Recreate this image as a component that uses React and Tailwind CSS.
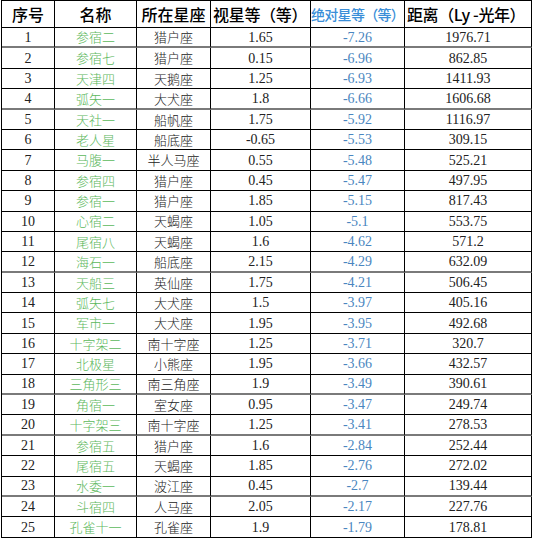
const rows = [
  [1, "参宿二", "猎户座", "1.65", "-7.26", "1976.71"],
  [2, "参宿七", "猎户座", "0.15", "-6.96", "862.85"],
  [3, "天津四", "天鹅座", "1.25", "-6.93", "1411.93"],
  [4, "弧矢一", "大犬座", "1.8", "-6.66", "1606.68"],
  [5, "天社一", "船帆座", "1.75", "-5.92", "1116.97"],
  [6, "老人星", "船底座", "-0.65", "-5.53", "309.15"],
  [7, "马腹一", "半人马座", "0.55", "-5.48", "525.21"],
  [8, "参宿四", "猎户座", "0.45", "-5.47", "497.95"],
  [9, "参宿一", "猎户座", "1.85", "-5.15", "817.43"],
  [10, "心宿二", "天蝎座", "1.05", "-5.1", "553.75"],
  [11, "尾宿八", "天蝎座", "1.6", "-4.62", "571.2"],
  [12, "海石一", "船底座", "2.15", "-4.29", "632.09"],
  [13, "天船三", "英仙座", "1.75", "-4.21", "506.45"],
  [14, "弧矢七", "大犬座", "1.5", "-3.97", "405.16"],
  [15, "军市一", "大犬座", "1.95", "-3.95", "492.68"],
  [16, "十字架二", "南十字座", "1.25", "-3.71", "320.7"],
  [17, "北极星", "小熊座", "1.95", "-3.66", "432.57"],
  [18, "三角形三", "南三角座", "1.9", "-3.49", "390.61"],
  [19, "角宿一", "室女座", "0.95", "-3.47", "249.74"],
  [20, "十字架三", "南十字座", "1.25", "-3.41", "278.53"],
  [21, "参宿五", "猎户座", "1.6", "-2.84", "252.44"],
  [22, "尾宿五", "天蝎座", "1.85", "-2.76", "272.02"],
  [23, "水委一", "波江座", "0.45", "-2.7", "139.44"],
  [24, "斗宿四", "人马座", "2.05", "-2.17", "227.76"],
  [25, "孔雀十一", "孔雀座", "1.9", "-1.79", "178.81"],
];

// rows whose bottom rule looks heavier/grey in the scan
const greyRules = new Set([1, 4, 12, 18, 20, 23]);

const head =
  "h-[27px] border-r border-b border-black flex items-center whitespace-nowrap overflow-hidden font-medium font-['Noto_Sans_CJK_SC',sans-serif]";

export default function App() {
  return (
    <div className="w-[533px] h-[542px] bg-white pl-px overflow-hidden">
      <div className="w-[531px] border-l border-t border-black grid grid-cols-[53px_82px_74px_100px_94px_127px]">
        {/* header */}
        <div className={`${head} justify-center text-[16px] text-black`}>序号</div>
        <div className={`${head} justify-center text-[16px] text-black`}>名称</div>
        <div className={`${head} justify-center text-[16px] text-black`}>所在星座</div>
        <div className={`${head} pl-[2px] text-[16px] text-black tracking-[-0.3px]`}>视星等（等）</div>
        <div className={`${head} text-[14px] text-[#3a8ed8] tracking-[-0.7px]`}>绝对星等（等）</div>
        <div className={`${head} pl-[2px] text-[16px] text-black tracking-[-0.4px]`}>距离（Ly -光年）</div>

        {rows.map((r) => {
          const line = greyRules.has(r[0]) ? "border-b-2 border-b-[#7a7a7a]" : "border-b border-b-black";
          const cell = `h-[20.4px] border-r border-r-black ${line} flex items-center justify-center`;
          const serif = "text-[14px] font-['Liberation_Serif',serif]";
          const han = "text-[13px] font-light font-['Noto_Sans_CJK_SC',sans-serif]";
          return [
            <div key={r[0] + "a"} className={`${cell} ${serif} text-[#222]`}>{r[0]}</div>,
            <div key={r[0] + "b"} className={`${cell} ${han} text-[#5cb85c]`}>{r[1]}</div>,
            <div key={r[0] + "c"} className={`${cell} ${han} text-[#222]`}>{r[2]}</div>,
            <div key={r[0] + "d"} className={`${cell} ${serif} text-[#222]`}>{r[3]}</div>,
            <div key={r[0] + "e"} className={`${cell} ${serif} text-[#4a86c0]`}>{r[4]}</div>,
            <div key={r[0] + "f"} className={`${cell} ${serif} text-[#222]`}>{r[5]}</div>,
          ];
        })}
      </div>
    </div>
  );
}
